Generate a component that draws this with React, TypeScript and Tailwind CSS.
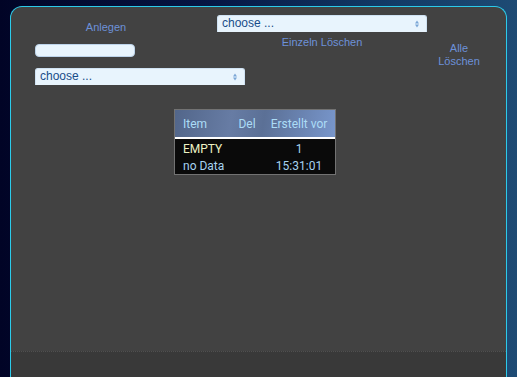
import React from "react";

const SelectBox = ({ className = "" }: { className?: string }) => (
  <div
    className={`h-[17px] w-[210px] flex items-start justify-between rounded-t-[3px] border border-b-0 border-[#cfe2f3] bg-[#e8f4fd] pl-[4px] pr-[7px] ${className}`}
  >
    <span className="text-[12px] leading-[15px] text-[#194d89] font-['Liberation_Sans',Arial,sans-serif]">
      choose ...
    </span>
    <svg width="4" height="8" viewBox="0 0 4 8" className="mt-[4px]">
      <path d="M0 3.5 L2 0.5 L4 3.5 Z" fill="#7aa6d6" />
      <path d="M0 4.5 L2 7.5 L4 4.5 Z" fill="#7aa6d6" />
    </svg>
  </div>
);

const Label = ({ children, className = "" }: { children: React.ReactNode; className?: string }) => (
  <div
    className={`text-[11px] leading-[13px] text-[#6d91d9] text-center font-['Liberation_Sans',Arial,sans-serif] ${className}`}
  >
    {children}
  </div>
);

export default function App() {
  const rows = [
    { item: "EMPTY", del: "", age: "1", itemColor: "text-[#ecf2c4]" },
    { item: "no Data", del: "", age: "15:31:01", itemColor: "text-[#a6d2f0]" },
  ];

  return (
    <div className="w-[517px] h-[377px] overflow-hidden bg-[linear-gradient(90deg,#010426_0%,#061543_40%,#123a66_75%,#1e4b74_100%)] pt-[6px] pl-[10px]">
      {/* PANEL */}
      <div className="w-[497px] h-[371px] flex flex-col rounded-t-[12px] border border-b-0 border-[#2ccbea] bg-[#424242]">
        <div className="flex-1 pt-[8px]">
          {/* TOP ROW */}
          <div className="flex">
            <div className="w-[206px] pl-[24px]">
              <Label className="w-[142px] mt-[6px]">Anlegen</Label>
              <div className="mt-[10px] w-[100px] h-[13px] rounded-[4px] border border-[#bcd3ea] bg-[#e8f4fd]" />
            </div>
            <div className="w-[210px]">
              <SelectBox />
              <Label className="mt-[4px]">Einzeln Löschen</Label>
            </div>
            <div className="w-[64px] pt-[27px]">
              <Label>
                Alle
                <br />
                Löschen
              </Label>
            </div>
          </div>

          {/* SECOND SELECT */}
          <SelectBox className="ml-[24px]" />

          {/* TABLE */}
          <div className="ml-[163px] mt-[24px] w-[162px] border border-[#727272] font-[Roboto,sans-serif] text-[12px]">
            <div className="flex h-[27px] items-center bg-[linear-gradient(100deg,#52668a_0%,#677ca4_35%,#5b7096_55%,#7896cb_100%)] text-[#acdcf6]">
              <div className="w-[56px] pl-[8px]">Item</div>
              <div className="w-[32px] text-center">Del</div>
              <div className="flex-1 text-center">Erstellt vor</div>
            </div>
            <div className="h-[2px] bg-white" />
            <div className="bg-[#0a0a0a] pt-[1px]">
              {rows.map((r) => (
                <div key={r.item} className="flex h-[17px] items-center">
                  <div className={`w-[56px] pl-[8px] whitespace-nowrap ${r.itemColor}`}>{r.item}</div>
                  <div className="w-[32px] text-center">{r.del}</div>
                  <div className="flex-1 text-center text-[#a6d2f0]">{r.age}</div>
                </div>
              ))}
            </div>
          </div>
        </div>

        {/* FOOTER */}
        <div className="h-[26px] border-t border-dotted border-[#505050] bg-[#393939]" />
      </div>
    </div>
  );
}
